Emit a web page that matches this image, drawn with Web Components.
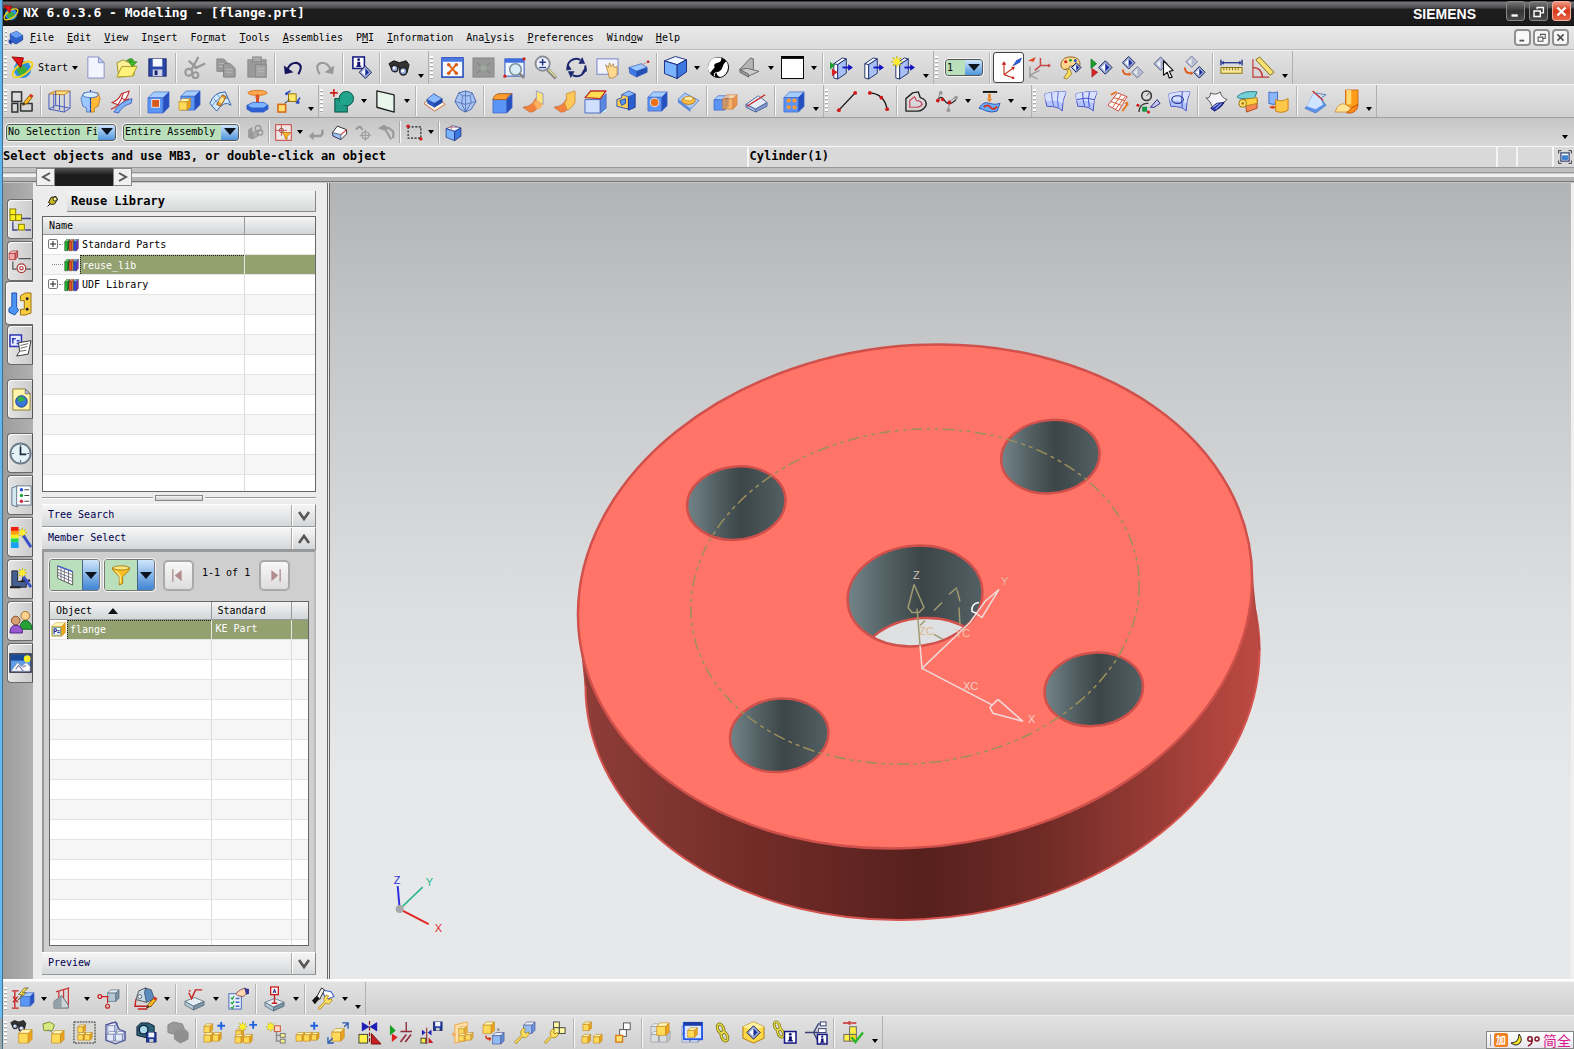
<!DOCTYPE html>
<html lang="en">
<head>
<meta charset="utf-8">
<title>NX 6.0.3.6 - Modeling - [flange.prt]</title>
<style>
html,body{margin:0;height:100%}
body{font:10px/14px "DejaVu Sans Mono","Noto Sans CJK SC",monospace;color:#000;background:#d4d4d4;overflow:hidden}
</style>
</head>
<body>
<nx-app>
  <nx-titlebar slot="top" caption="NX 6.0.3.6 - Modeling - [flange.prt]" brand="SIEMENS"></nx-titlebar>
  <nx-menubar slot="top" items="_File _Edit _View In_sert Fo_rmat _Tools _Assemblies P_MI _Information Ana_lysis _Preferences Wind_ow _Help"></nx-menubar>
  <nx-row slot="top">
    <nx-toolbar><nx-start>Start</nx-start><nx-tools icons="new open save | cut copy paste | undo redo | info | find ,"></nx-tools></nx-toolbar>
    <nx-toolbar><nx-tools icons="fit fitsel zoombox zoom rotate pan persp | shaded v section edgeview v bgwhite v | clip1 clip2 clip3 ,"></nx-tools></nx-toolbar>
    <nx-toolbar><nx-combo label="Work layer" value="1" class="layer"></nx-combo><nx-tools icons="| *wcs wcsorient palette showhide hide select invert | ruler angle ,"></nx-tools></nx-toolbar>
  </nx-row>
  <nx-row slot="top" class="second">
    <nx-toolbar><nx-tools icons="sketch | extrude revolve sweep | block pocket surface | pull assyconstr ,"></nx-tools></nx-toolbar>
    <nx-toolbar><nx-tools icons="unite v plane v | trimbody sphere | blend draft draft2 chamfer shell hole emboss | split divide | pattern ,"></nx-tools></nx-toolbar>
    <nx-toolbar><nx-tools icons="line arc | offset spline v project v ,"></nx-tools></nx-toolbar>
    <nx-toolbar><nx-tools icons="mesh1 mesh2 mesh3 studio mesh4 | sheet roll patch | draftan flow ,"></nx-tools></nx-toolbar>
  </nx-row>
  <nx-selectionbar slot="top"></nx-selectionbar>
  <nx-status slot="top"><span>Select objects and use MB3, or double-click an object</span><span slot="cue">Cylinder(1)</span></nx-status>
  <nx-strip slot="top"></nx-strip>
  <nx-resourcebar slot="side"></nx-resourcebar>
  <nx-panel slot="panel" caption="Reuse Library">
    <nx-tree></nx-tree>
    <nx-splitter></nx-splitter>
    <nx-section caption="Tree Search"></nx-section>
    <nx-section caption="Member Select" open><nx-members></nx-members></nx-section>
    <nx-section caption="Preview"></nx-section>
  </nx-panel>
  <nx-viewport slot="view"></nx-viewport>
  <nx-row slot="bottom" class="low">
    <nx-toolbar><nx-tools icons="autodim v vertdim v orddim | drawsketch v | finish v checklist | datum v | pmitools v ,"></nx-tools></nx-toolbar>
  </nx-row>
  <nx-row slot="bottom" class="low">
    <nx-toolbar><nx-tools icons="findcomp opencomp isolate ghost snapshot graycomp | addcomp newcomp newparent comparray movecomp mirror constrain remember moveto replace wrench wrench2 | explode sequence | wave1 wave2 link interpart linkinfo relinfo | checkassy ,"></nx-tools></nx-toolbar>
  </nx-row>
  <nx-ime slot="float"></nx-ime>
</nx-app>

<script>
const define = (name, css, html) => customElements.define(name, class extends HTMLElement {
  connectedCallback() {
    if (this.shadowRoot) return;
    const root = this.attachShadow({mode: 'open'});
    root.innerHTML = `<style>:host,*{box-sizing:border-box}button{font:inherit;color:inherit;margin:0;padding:0;border:0;background:none}${css}</style>` + (typeof html === 'function' ? html(this) : html);
  }
});

/* ---------- icon drawing helpers (24 x 24 grid) ---------- */
const P = (d, f = 'none', s = 'none', w = 1) => `<path d="${d}" fill="${f}" stroke="${s}" stroke-width="${w}" stroke-linejoin="round"/>`;
const L = (d, s = '#222', w = 1.5, dash = '') => `<path d="${d}" fill="none" stroke="${s}" stroke-width="${w}" stroke-dasharray="${dash}"/>`;
const R = (x, y, w, h, f = 'none', s = 'none', k = 1) => `<rect x="${x}" y="${y}" width="${w}" height="${h}" fill="${f}" stroke="${s}" stroke-width="${k}"/>`;
const C = (x, y, r, f = 'none', s = 'none', w = 1) => `<circle cx="${x}" cy="${y}" r="${r}" fill="${f}" stroke="${s}" stroke-width="${w}"/>`;
const E = (x, y, a, b, f, s = 'none', w = 1) => `<ellipse cx="${x}" cy="${y}" rx="${a}" ry="${b}" fill="${f}" stroke="${s}" stroke-width="${w}"/>`;
const BL = ['#a4ccff', '#5a94f4', '#2450c0', '#3c64c4'], YE = ['#fff8b8', '#ffda58', '#eca41c', '#c48c20'],
      WH = ['#fff', '#e6efff', '#b8c8e8', '#5565a8'], LB = ['#eef6ff', '#7ab4ff', '#3c78e0', '#1c2c80'], ST = ['#e4eef4', '#b4c8d4', '#7c94a4', '#566a7a'];
const cube = (x, y, s, c = YE) => { const d = s * .28, f = s - d;
  return P(`M${x} ${y + d}l${d} ${-d}h${f}l${-d} ${d}z`, c[0], c[3], .7) + P(`M${x} ${y + d}h${f}v${f}h${-f}z`, c[1], c[3], .7) + P(`M${x + f} ${y + d}l${d} ${-d}v${f}l${-d} ${d}z`, c[2], c[3], .7); };
const iso = (x, y, r, c) => P(`M${x - r} ${y - r * .6}L${x} ${y - r}L${x + r} ${y - r * .7}L${x + r * .15} ${y - r * .25}z`, c[0], c[3]) + P(`M${x - r} ${y - r * .6}L${x + r * .15} ${y - r * .25}V${y + r}L${x - r} ${y + r * .55}z`, c[1], c[3]) + P(`M${x + r * .15} ${y - r * .25}L${x + r} ${y - r * .7}V${y + r * .4}L${x + r * .15} ${y + r}z`, c[2], c[3]);
const slab = (y, c) => P(`M2 ${y + 4}L12 ${y}L22 ${y + 4}L11 ${y + 9}z`, c[0], c[3], .8) + P(`M2 ${y + 4}L11 ${y + 9}V${y + 13}L2 ${y + 8}z`, c[1], c[3], .8) + P(`M11 ${y + 9}L22 ${y + 4}V${y + 8}L11 ${y + 13}z`, c[2], c[3], .8);
const dia = (x, y, r, a = '#1c2f9c', o = 1) => `<g opacity="${o}">${P(`M${x - r} ${y}L${x} ${y - r}L${x + r} ${y}L${x} ${y + r}z`, '#9fb0dc', '#141c50')}${P(`M${x - r * .6} ${y}L${x} ${y - r * .6}V${y + r * .6}z`, '#fff')}${P(`M${x + r * .6} ${y}L${x} ${y - r * .6}V${y + r * .6}z`, a)}</g>`;
const plus = (x, y, r = 4, c = '#1e62e0', w = 2) => L(`M${x - r} ${y}H${x + r}M${x} ${y - r}V${y + r}`, c, w);
const star = (x, y, r = 5) => L(`M${x - r} ${y}H${x + r}M${x} ${y - r}V${y + r}M${x - r * .7} ${y - r * .7}l${r * 1.4} ${r * 1.4}M${x + r * .7} ${y - r * .7}l${-r * 1.4} ${r * 1.4}`, '#c8c000', 1.2) + C(x, y, r * .55, '#ffee30');
const ar = (x, y, dx, dy, c = '#1010c0') => { const px = -dy, py = dx; return P(`M${x + dx} ${y + dy}L${x + px * .7} ${y + py * .7}L${x - px * .7} ${y - py * .7}z`, c); };
const flop = (x, y, s) => R(x, y, s, s, '#203a9c', '#101c60', .8) + R(x + s * .2, y, s * .6, s * .5, '#f0f4ff') + R(x + s * .3, y + s * .68, s * .42, s * .32, '#ccc');
const arm = c => P('M4 20L12 12L11 8L14 4L17 5L15 8L17 10L20 8L21 11L17 15L13 14L6 22z', c || '#ffe060', '#a07808', .9);
const bino = (x, y, k = 1) => `<g transform="translate(${x} ${y}) scale(${k})">${P('M1 5L6 2L12 4L19 2L22 6L20 14L13 13L11 8L8 12L4 11z', '#333', '#111')}${C(7, 10, 3.4, '#8fa4d8', '#222', 1.4)}${C(16, 13, 3.8, '#8fa4d8', '#222', 1.4)}${C(6.5, 9.5, 1.4, '#fff')}${C(15.5, 12.5, 1.6, '#fff')}</g>`;
const bolt = (x, y) => P(`M${x + 6} ${y}L${x} ${y + 7}L${x + 4} ${y + 7}L${x - 1} ${y + 13}L${x + 8} ${y + 5}L${x + 4} ${y + 5}L${x + 10} ${y}z`, '#ffe838', '#333', .6);
const pencil = (x, y) => P(`M${x} ${y + 8}L${x + 2} ${y + 4}L${x + 7} ${y - 2}L${x + 10} ${y}L${x + 5} ${y + 6}z`, '#ffb820', '#6a3c00', .8) + P(`M${x + 7} ${y - 2}l3 2l1.5 -2l-3 -2z`, '#d83020') + P(`M${x} ${y + 8}l1.5 -3l1.5 1.5z`, '#222');
const clipbox = P('M4 8L8 8V24L4 23z', '#fff', '#20306c') + P('M4 8L13 2L17 3L8 9z', '#f4f8ff', '#20306c') + P('M8 9L17 3V18L8 24z', '#a8c0f4', '#20306c') + L('M13 12H20', '#1418c8', 2) + ar(19, 12, 5, 0);
const wrap = extra => P('M1 4Q12 1 23 2Q19 10 19 22Q16 17 3 17Q1 10 1 4', '#b4c4ff', '#4450c8') + P('M1 4Q12 1 23 2Q20 8 19 14Q12 9 2 12Q1 8 1 4', '#d8e2ff') + extra;
const chain = (x, y) => `<g fill="none" stroke="#777000" stroke-width="3.2"><ellipse cx="${x}" cy="${y}" rx="3" ry="5" transform="rotate(-25 ${x} ${y})"/><ellipse cx="${x + 4}" cy="${y + 8}" rx="3" ry="5" transform="rotate(-25 ${x + 4} ${y + 8})"/></g><g fill="none" stroke="#e8dc50" stroke-width="1.6"><ellipse cx="${x}" cy="${y}" rx="3" ry="5" transform="rotate(-25 ${x} ${y})"/><ellipse cx="${x + 4}" cy="${y + 8}" rx="3" ry="5" transform="rotate(-25 ${x + 4} ${y + 8})"/></g>`;
const ibox = (x, y, s) => R(x, y, s, s, '#fff', '#141880', 1.6) + R(x + s * .38, y + s * .42, s * .26, s * .42, '#101470') + R(x + s * .28, y + s * .76, s * .46, s * .1, '#101470') + C(x + s * .5, y + s * .24, s * .12, '#101470');
const book = (x, c) => P(`M${x} 8l3 -4h5l-3 4z`, c[0], '#222', .6) + P(`M${x} 8h5v14h-5z`, c[1], '#222', .6) + P(`M${x + 5} 8l3 -4v14l-3 4z`, c[2], '#222', .6);
const isomany = c => cube(2, 3, 10, c) + cube(2, 11, 11, c) + cube(11, 11, 11, c);

const ICONS = {
  nx: E(12, 14, 9, 9, '#2e8fe0') + P('M6 14Q10 8 16 12Q18 18 12 21Q7 20 6 14', '#3cae38') + `<ellipse cx="12" cy="14" rx="12" ry="5.500" fill="none" stroke="#f4d21c" stroke-width="2" transform="rotate(-35 12 14)"/>` + P('M1 1L13 2L10 12z', '#e01818', '#900'),
  app: P('M3 6L13 2L22 8L22 15L12 21L4 17z', '#2d62cc', '#142c80') + P('M3 6L13 2L22 8L12 12z', '#6aa0f4') + P('M1 14L6 17L5 22L1 19z', '#1a3fa0'),
  new: P('M4 1H15L21 7V23H4z', '#f2f4ff', '#8890c8') + P('M15 1V7H21z', '#c4ccf4', '#8890c8'),
  open: P('M2 7L9 4L12 6H20V20L4 22z', '#fff09a', '#9a9020') + P('M2 22L7 11H23L18 21z', '#fff27a', '#a89c20') + P('M12 5Q18 0 20 6L23 6L18 11L14 6L17 6Q15 4 12 5z', '#3cb828', '#207010', .6),
  save: R(3, 3, 18, 18, '#2b48a8', '#16246c') + R(7, 3, 10, 8, '#f4f8ff') + R(7, 14, 10, 7, '#ccd2e8') + R(9, 15, 3, 5, '#16246c'),
  cut: L('M9 14L16 1M12 13L23 8M15 13L6 5', '#999', 2.4) + C(6, 17, 3.6, 'none', '#999', 2.2) + C(13, 20, 3, 'none', '#999', 2.2),
  copy: P('M3 3H10L14 7V16H3z', '#999', '#888') + P('M10 8H17L22 13V22H10z', '#9d9d9d', '#808080') + L('M5 8H11M5 11H9M12 14H19M12 17H19', '#bbb', 1),
  paste: R(3, 4, 19, 18, '#999', '#888') + R(8, 1, 9, 5, '#aaa', '#888') + R(11, 9, 11, 13, '#a4a4a4', '#888') + L('M13 13H20M13 16H20', '#bbb', 1),
  undo: L('M6 13Q9 7 15 7Q23 9 17 19', '#14145c', 2.2) + P('M2 10L3 19L12 17z', '#14145c'),
  redo: L('M18 13Q15 7 9 7Q1 9 7 19', '#999', 2.2) + P('M22 10L21 19L12 17z', '#999'),
  info: ibox(3, 1, 12) + dia(16, 17, 6.5),
  find: bino(1, 3, 1),
  fit: R(1, 2, 22, 20, '#f4f8ff', '#2048b8', 1.6) + R(1, 2, 22, 4, '#4a78e0') + L('M8 9L16 18M16 9L8 18', '#e06818', 2) + C(8, 9, 1.8, '#d85810') + C(16, 9, 1.8, '#d85810') + C(8, 18, 1.8, '#d85810') + C(16, 18, 1.8, '#d85810'),
  fitsel: R(1, 2, 22, 20, '#989898', '#8a8a8a') + L('M5 7L19 18M19 7L5 18', '#808c80', 1.5) + R(9, 10, 6, 5, '#9fa89f'),
  zoombox: R(2, 3, 20, 18, '#f0f6ff', '#2850c0') + R(2, 3, 20, 4, '#3f70e0') + C(13, 14, 6, '#d8ecf4', '#7a8e9c', 1.6) + L('M17 18L22 23', '#888', 3) + C(22, 3, 1.7, '#d02020') + C(2, 21, 1.7, '#d02020'),
  zoom: C(9, 8, 7.4, '#eef2fc', '#8a8e98', 2) + plus(9, 6.5, 3.4, '#283888', 1.6) + L('M5.500 12H12.500', '#283888', 1.4) + L('M14 14L23 23', '#888', 4) + L('M15 14L23 22', '#e8e088', 1.4),
  rotate: L('M3 14A9 9 0 0 1 16 4M21 10A9 9 0 0 1 8 20', '#1c2870', 2) + P('M14 8L21 8L18 1z', '#1c2870') + P('M10 16L3 16L6 23z', '#1c2870') + P('M17 18L22 10L23 16z', '#1c2870') + P('M1 15L7 14L3 8z', '#1c2870'),
  pan: R(1, 3, 22, 16, '#f4f4ff', '#7080c8') + P('M12 15L10 9L13 12L14 7L16 11L18 8L19 12L22 11L22 20L18 23H14z', '#ffd890', '#a07030', .7),
  persp: P('M2 12L15 8L21 12L10 16z', '#9cc8ff', '#2a58b8', .7) + P('M2 12L10 16V22L3 18z', '#3c7be4', '#2a58b8', .7) + P('M10 16L21 12V17L10 22z', '#2450b4', '#2a58b8', .7) + C(22, 6, 1.4, '#c02020') + L('M15 9L21 7', '#c88', .8),
  shaded: iso(12, 12, 11.5, LB),
  section: C(12, 12, 10.5, '#000', '#000') + P('M12 1.500A10.500 10.500 0 0 0 3 18Q6 14 8 12Q6 8 11 7Q15 7 15 1.900z', '#fff') + P('M20 5.500Q22 8 22 12Q21 20 14 22Q10 21 10 17Q15 16 16 12Q17 8 20 5.500', '#fff') + L('M8 21Q6 18 10 17', '#fff', 1),
  edgeview: P('M2 14L13 2L16 3V14L8 18z', '#b4b4b4', '#666') + P('M2 14L10 13L22 16L11 21z', '#ccc', '#666') + P('M2 14L11 19V22L2 17z', '#999', '#666'),
  bgwhite: R(0.5, 0.5, 23, 23, '#fff', '#000') + R(0, 0, 24, 3, '#000'),
  clip1: clipbox + P('M0 6L5 10L0 14z', '#18a028') + P('M2 13L8 17L2 21z', '#d82020'),
  clip2: clipbox, clip3: clipbox + star(5, 6, 6),
  wcs: L('M6 20V7M6 20L17 12M6 20L17 24', '#c83828', 1.4) + ar(6, 8, 0, -4, '#c02020') + ar(16, 12.500, 3, -2, '#c02020') + ar(16, 23.500, 3, 1, '#c02020') + P('M17 9L21 3L27 0L25 5L18 9z', '#2a60d8', '#1a2c90', .6),
  wcsorient: L('M13 10V2M13 10H23M13 10L7 15', '#c84848', 1.6) + L('M2 23V11M2 20L12 15M2 20L10 24', '#9a9a9a', 1.4) + P('M0 5L8 1L6 6z', '#e04820') + ar(21, 10, 3, 0, '#c84848'),
  palette: P('M2 8Q4 0 14 1Q22 2 22 9Q20 14 15 12L14 10Q10 10 10 14L5 14Q1 12 2 8', '#ffd890', '#906020') + C(7, 6, 1.6, '#d02020') + C(12, 4.500, 1.5, '#18a028') + C(17, 5, 1.5, '#2050d8') + dia(18, 12, 5) + P('M5 23L9 17L8 13L12 15L13 19L8 24z', '#ffe060', '#907010', .8),
  showhide: P('M1 3L7 8L1 13z', '#18a028', '#0c6018', .6) + P('M2 13L8 17L2 22z', '#e02020', '#801010', .6) + dia(16, 12, 7),
  hide: dia(8, 7, 6.5) + dia(17, 17, 6, '#8c98c8', .5) + L('M2 14Q2 20 8 19', '#e05818', 2) + ar(8, 19, 3, 0, '#e05818'),
  select: dia(9, 8, 7, '#8c98c8', .65) + P('M12 5V20L16 17L18 23L21 22L18 16L22 15z', '#fff', '#111', 1.2),
  invert: dia(9, 6, 6, '#8c98c8', .5) + dia(17, 17, 6) + L('M2 12Q2 18 8 18', '#e05818', 2) + ar(8, 18, 3, 0, '#e05818'),
  ruler: R(1, 12, 22, 6, '#f8e898', '#8a7410') + L('M4 12V15M7 12V15M10 12V15M13 12V15M16 12V15M19 12V15', '#665500', .8) + L('M3 7H21', '#28388c', 1.4) + ar(4, 7, -3, 0, '#28388c') + ar(20, 7, 3, 0, '#28388c') + L('M1 4V10M23 4V10', '#28388c'),
  angle: L('M2 3V22H19', '#c03838', 1.2) + L('M2 12Q11 12 12 22', '#c03838') + P('M5 4L9 1L24 17L20 20z', '#f8e070', '#7c6a10'),
  sketch: R(1, 2, 10, 10, 'none', '#333', 1.6) + R(1, 14, 6, 9, 'none', '#333', 1.6) + P('M10 14H22V22H10z', 'none', '#333', 1.6) + pencil(12, 8),
  extrude: P('M1 4L8 1H23L17 5z', '#ffdf80', '#c08020') + L('M1 4V20L17 23V5M8 1V16L23 19V1M1 20L8 16M17 23L23 19M6 4V20M12 5V21', '#4458b8', 1),
  revolve: P('M12 3H20L22 9L20 17L16 19V23H12z', '#ffb838', '#b87410', .8) + P('M12 3H5L2 9L4 17L8 19V23H12z', '#9cc8ff', '#3c68c0', .8) + L('M12 0V24', '#1c3ca8', 1.2, '3 1') + E(12, 5, 8, 3, '#d8ecff', '#4a74c8'),
  sweep: P('M2 13Q8 12 12 4L20 1Q18 10 10 16z', '#fff', '#c03030', 1.2) + P('M4 23Q10 12 23 9L22 14Q13 16 9 24z', '#7cb0f8', '#2c50b8', .8) + L('M1 20Q10 18 14 3M12 8Q16 12 20 9', '#c03030', 1.2),
  block: cube(1, 2, 22, BL) + R(5, 10, 8, 8, '#d85818', '#fff', .8), pocket: cube(3, 1, 20, BL) + cube(1, 9, 12, YE),
  surface: P('M1 14Q5 2 17 2L23 16Q16 10 8 22z', '#d0e8ff', '#2c60a8') + L('M3 17Q9 6 20 9M9 5L15 13M5 9L12 17', '#5080c0', .8) + P('M8 15L14 5L18 7L12 17z', '#e89830', '#804808', .8) + P('M10 12L13 7L16 9L13 14z', '#ffe890'),
  pull: E(12, 3, 10, 2.6, '#ffa850', '#d87820') + L('M12 14V8', '#e04818', 3) + ar(12, 8, 0, -4, '#e04818') + P('M1 16L7 13H19L23 16L18 19H6z', '#7cb4ff', '#2858c0', .8) + P('M1 16L6 19H18L23 16V20L18 23H6L1 20z', '#2c60d4', '#2858c0', .8),
  assyconstr: R(12, 4, 8, 8, '#ffe868', '#907000') + R(1, 15, 8, 8, '#ffe070', '#d86818', 1.6) + L('M8 14L13 10', '#555', 1.2) + L('M9 4L14 1M20 14L24 8', '#2848c0', 1.6) + C(10, 4, 1.5, '#2848c0') + C(22, 13, 1.5, '#2848c0'),
  unite: R(4, 9, 13, 14, '#1f9a84', '#064c40') + C(16, 9, 7.500, '#20a48c', '#064c40') + P('M9 9H17V16H9z', '#20a48c') + plus(3, 3, 4, '#d01818', 1.6),
  plane: P('M3 1L21 5V23L3 18z', '#e8f6ec', '#222', 1.4),
  trimbody: P('M1 14L12 4L23 15L12 22z', '#fff4e8', '#c86838') + P('M4 10L11 4L20 9L12 14z', '#8cbcff', '#2448a8', .7) + P('M4 10L12 14V18L5 14z', '#2c5cc8', '#2448a8', .7) + P('M12 14L20 9V13L12 18z', '#1c48a8', '#2448a8', .7),
  sphere: P('M5 3L12 1L19 3L23 12L18 20L12 23L6 20L1 12z', '#a8c4f4', '#4a68b0') + L('M1 12L12 15L23 12M12 1V23M5 3L9 6L17 6L19 3M9 6L8 14L12 23M17 6L18 13L12 23', '#4a68b0', .8),
  blend: cube(2, 4, 20, BL) + P('M2 10Q3 4 9 4H22Q17 5 16 10z', '#ff9c30', '#a85808', .8),
  draft: P('M1 18Q11 17 14 9L20 12Q15 24 8 23z', '#f4813c', '#c06028', .7) + P('M15 1L22 4V15Q17 13 15 10z', '#ffe478', '#8890c0', .8) + P('M15 10Q17 13 22 15Q19 20 16 20L12 14z', '#ffb060'),
  draft2: P('M1 18Q11 17 14 9L20 12Q15 24 8 23z', '#f4813c', '#c06028', .7) + P('M14 4L23 1V13Q19 20 15 21L12 14Q15 10 14 4z', '#ffc858', '#c88830', .8),
  chamfer: R(1, 3, 22, 20, '#c8ecff') + P('M1 10H17V24H1z', '#cfe0ff', '#4a68c0') + P('M17 10L23 4V19L17 24z', '#5a88e0', '#4a68c0') + P('M1 8L7 1H23L17 9z', '#ffdf50', '#c03028', 1.4),
  shell: P('M2 10L7 8V5L14 2V20L2 17z', '#ffd050', '#2c50b0') + P('M14 2L21 4V18L14 21z', '#2c60d0', '#1c3c98') + P('M5 11L11 9V14L7 16z', '#5a94f0', '#2c50b0') + P('M7 5L14 1L21 4L14 7z', '#8cbcff', '#2c50b0', .7),
  hole: cube(2, 2, 20, BL) + C(9, 13, 4.500, '#e87018', '#fff', .8),
  emboss: P('M1 10L8 3L23 11L14 20z', '#a8ccff', '#4870c0', .8) + P('M1 10L14 20V23L1 13z', '#5a88dc') + E(12, 11, 7, 4, '#ffc048', '#b87818') + E(12, 9, 4.500, 2.400, '#ffe8a0', '#b87818', .7),
  split: cube(0, 6, 15, BL) + `<g opacity=".75">${cube(9, 5, 15, ['#ffd8a0', '#ffa848', '#f08020', '#d06010'])}</g>`,
  divide: P('M1 15L14 6L23 13L11 20z', '#e4ecf8', '#5068a0') + P('M1 15L11 20V23L1 18z', '#a8bce0', '#5068a0') + P('M11 20L23 13V17L11 23z', '#8098d0', '#5068a0') + L('M2 17L21 5', '#c82020', 1.3),
  pattern: cube(2, 2, 21, BL) + C(7, 11, 2.2, '#ff9830') + C(13, 11, 2.2, '#ff9830') + C(7, 18, 2.2, '#ff9830') + C(13, 18, 2.2, '#ff9830'),
  line: L('M3 21L20 3', '#111', 1.4) + C(3, 21, 2, '#d01818') + C(20, 3, 2, '#d01818'),
  arc: L('M3 3Q18 4 21 20', '#111', 1.4) + C(3, 3, 2, '#d01818') + C(15, 8, 2, '#d01818') + C(21, 20, 2, '#d01818'),
  offset: P('M2 22V9L9 3L15 2L17 8Q24 10 23 16Q20 22 14 22z', 'none', '#222', 1.4) + P('M6 18V11L11 7L13 11Q18 11 19 15Q17 18 13 18z', 'none', '#c84860', 1.3),
  spline: L('M2 12Q6 4 10 11T22 10', '#222', 1.3) + L('M2 12L6 2M14 22L15 12L22 7', '#888', 1) + C(3, 11, 2, '#d01818') + C(8, 10, 1.8, '#d01818') + C(15, 13, 2, '#d01818') + C(6, 3, 2, '#999') + C(14, 21, 2, '#999') + C(22, 8, 2, '#999'),
  project: L('M5 2H20', '#111', 2) + L('M12 4V9', '#e88830', 3) + ar(12, 9, 0, 4, '#e88830') + P('M1 19Q6 11 12 14Q18 16 23 14L20 22Q14 24 9 22Q5 20 1 19', '#68aef8', '#2858b8') + L('M6 18Q10 14 13 18T20 17', '#d83028', 2),
  mesh1: wrap(L('M8 3Q8 10 10 17M15 2Q13 10 15 18', '#5a68d0', 1)), mesh2: wrap(L('M8 3Q8 10 10 17M15 2Q13 10 15 18M2 10Q12 7 20 10', '#3848c8', 1)),
  mesh3: P('M2 16L12 3L22 7L13 22z', '#fff', '#c84838', 1) + L('M5 12L16 16M8 8L19 11M7 18L16 5M10 20L20 7', '#d85030', 1) + L('M5 5L11 2M17 22L23 14', '#e87828', 2) + ar(21, 15, 2, -3, '#e87828'),
  studio: C(10, 6, 5, 'none', '#333', 1.6) + L('M10 6L13 3', '#333', 1) + L('M2 23Q3 13 12 14', '#333', 1.3) + R(6, 18, 4, 4, '#18a038', '#084') + C(12, 23, 1.6, '#d01818') + C(1, 16, 1.6, '#d01818') + P('M14 18L21 10L24 14L18 18z', '#c0c8f0', '#28287c'),
  mesh4: wrap(E(10, 10, 6, 4, 'none', '#28388c', 1.3) + L('M15 2Q13 10 15 18', '#3848c8', 1)),
  sheet: P('M1 8Q5 10 6 3Q11 6 16 2Q17 8 23 10Q18 13 18 16Q12 12 8 18Q6 12 1 8', '#f4f4f8', '#555') + P('M6 19L12 14L20 13L16 18L10 22z', '#2838b8', '#101860') + L('M8 18L14 14M11 20L17 14', '#fff', .8),
  roll: P('M1 7Q8 0 22 2L19 9H4z', '#74d0d8', '#2a7c88') + P('M10 14L22 9V19L11 23z', '#f48850', '#b04820') + P('M6 10L22 8V14L8 17z', '#ffd040', '#a87810', .8) + C(7, 14, 4, '#ffe070', '#907008') + C(7, 14, 1.5, '#b07810'),
  patch: P('M2 2Q6 4 11 2V14Q6 16 2 14z', '#8cb8ff', '#4068c0') + P('M9 10Q15 13 22 9V21Q15 25 9 22z', '#ffc848', '#c88010') + L('M3 18H7', '#e04010', 2) + ar(6, 18, 3, 0, '#e04010'),
  draftan: P('M4 16L9 5Q13 2 17 8L23 16L12 24L1 19z', '#5c94ec', '#4878c8', .8) + P('M3 17L9 5Q13 2 17 8L20 15L12 20z', '#cfe4ff') + L('M9 1L20 11', '#c82828', 1.4) + L('M12 3L23 5L17 9', '#5880c8', 1),
  flow: P('M11 0H24V15L17 19L11 15z', '#ff9c18', '#c85808', .8) + P('M12 0h5v15h-5z', '#ffd870') + P('M0 23Q4 12 11 15L17 19Q15 24 11 23z', '#ffe498', '#c88830', .8) + P('M17 19L24 15Q24 22 17 24H12z', '#ff8c18', '#b84808', .8),
  autodim: cube(10, 6, 14, BL) + L('M1 4H8M1 22H8M4 5V21', '#c82020', 1.4) + L('M2 10L7 16M7 10L2 16', '#c82020', 1.4) + bolt(8, 1),
  vertdim: L('M5 15V4M10 12V3M15 20V1M2 5L16 1', '#c83838', 1.3) + P('M0 15L8 9L15 19V22H0z', '#ccd4d8', '#667') + P('M0 15L8 9V22H0z', '#94a0a8'),
  orddim: cube(11, 3, 12, ST) + L('M5 10H12M11 11V17', '#c82020', 1.2) + C(3, 10, 2, 'none', '#c82020', 1.3) + C(11, 20, 2, 'none', '#c82020', 1.3),
  drawsketch: P('M5 4L12 1L19 8L13 16L2 13z', '#c8dce8', '#333', .8) + P('M12 1L18 3L21 12L13 16L11 6z', '#5c8cc0', '#345', .8) + C(6, 10, 2, '#fff', '#556') + L('M2 13L1 20H18M4 23H14', '#c82020', 1.5) + pencil(13, 14),
  finish: slab(11, ST) + L('M6 6L9 12L13 3H20', '#c82020', 1.5) + C(7, 4, 1, '#c22'),
  checklist: R(3, 7, 13, 16, '#e8f0ff', '#4868b8') + L('M5 11l1.500 1.500l2 -3M5 16l1.500 1.500l2 -3M5 21l1.500 1.500l2 -3', '#18a028', 1.2) + L('M10 12H14M10 16H14M10 20H14', '#4868b8') + P('M10 7L15 3L20 1L23 5L18 10L12 9z', '#ffd8b0', '#855') + P('M19 1L24 2V7L21 8z', '#383898'),
  datum: slab(12, ST) + R(8, 0, 8, 8, '#fff', '#c82020', 1.4) + L('M12 8V17M9 17H15', '#c82020', 1.4) + L('M10.500 6.500L12 2L13.500 6.500M11 5H13', '#28287c', 1),
  pmitools: P('M10 3L20 5L23 10L15 13z', '#fff', '#4868c8', 1.2) + P('M5 10L10 1L13 3L8 13z', '#f0f0f0', '#222') + P('M0 14L5 9L8 12L3 18z', '#111') + `<g transform="translate(3 5) scale(.85)">${arm()}</g>`,
  findcomp: bino(-1, -2, .75) + cube(8, 9, 14), opencomp: P('M1 3L8 1L13 4L11 10H2z', '#d8e880', '#789028') + P('M6 9L11 12', 'none', '#888') + cube(10, 10, 13),
  isolate: `<rect x="1" y="1" width="22" height="22" fill="#d8d8d4" stroke="#222" stroke-dasharray="2 1"/>` + cube(5, 4, 8) + cube(5, 12, 8) + cube(12, 12, 8),
  ghost: `<g opacity=".8">${cube(4, 2, 10, WH)}${cube(3, 11, 10, WH)}${cube(12, 11, 10, WH)}</g>` + L('M2 4L12 1L16 9L22 11V20L12 24L2 20z', '#404890', 1.2),
  snapshot: P('M2 6L6 2H14L20 5V14L14 18L2 15z', '#2c6078', '#123') + C(9, 9, 4.500, '#a8d8e8', '#123', 1.4) + flop(12, 12, 10),
  graycomp: P('M2 4L8 1L17 3L19 8L23 12V19L15 23L9 19L9 14L2 12z', '#999', '#8a8a8a') + P('M9 11L16 8L23 12V19L15 22L9 18z', '#8f8f8f'),
  addcomp: cube(1, 3, 9) + cube(1, 12, 10) + cube(10, 12, 9) + plus(19, 5), newcomp: cube(2, 8, 8) + cube(1, 14, 9) + cube(10, 14, 9) + star(9, 6, 5) + plus(20, 4),
  newparent: star(6, 6, 5) + R(10, 5, 6, 6, '#ffd8c8', '#c85838') + L('M12 11V21H16M12 15H16', '#888') + R(16, 13, 5, 4, '#f8f088', '#777') + R(16, 19, 5, 4, '#f8f088', '#777'),
  comparray: cube(0, 12, 9) + cube(8, 12, 9) + cube(16, 12, 8) + plus(19, 5),
  movecomp: cube(5, 8, 13) + L('M18 6L22 2M16 2H22V8M1 17V23H7M2 22L6 18', '#2858b0', 1.4),
  mirror: P('M4 1L12 6L4 11z', '#2020b8') + P('M20 1L12 6L20 11z', '#2020b8') + L('M12 0V24', '#801010', 1.2, '4 2') + R(1, 14, 9, 9, '#fff048', '#443') + P('M14 13L24 24H14z', '#c82020', '#711'),
  constrain: P('M1 4L7 10L1 15z', '#18a028') + P('M3 13L9 17L3 22z', '#e02020') + L('M18 1V11M12 11H24', '#902838', 1.4) + L('M12 22L18 14M17 22L23 14', '#902838', 1.6),
  remember: P('M2 9L6 12L2 15z', '#2020b8') + P('M12 9L8 12L12 15z', '#2020b8') + R(1, 18, 5, 5, '#fff048', '#443') + P('M9 17L14 23H9z', '#c82020') + L('M7 7V24', '#811', 1) + flop(14, 1, 9),
  moveto: P('M4 4L17 1V20L4 23z', '#ffe0a8', '#f0a848') + `<g opacity=".85">${cube(8, 6, 8)}${cube(8, 13, 8)}${cube(15, 12, 8)}</g>` + C(3, 14, 2, '#f4b068'),
  replace: cube(1, 1, 12) + `<g opacity=".75">${cube(11, 12, 12, LB)}</g>` + L('M4 15Q4 20 9 18', '#d83018', 1.6) + ar(7, 19, 3, -1, '#d83018') + C(17, 9, 1.5, '#999'),
  wrench: `<g opacity=".7">${cube(11, 1, 12, LB)}</g><g transform="translate(-2 4) scale(.9)">${arm()}</g>`,
  wrench2: R(10, 1, 6, 6, '#fff8a0', '#444') + R(10, 7, 6, 6, '#fff8a0', '#444') + R(16, 7, 6, 6, '#fff8a0', '#444') + `<g transform="translate(-3 5) scale(.85)">${arm()}</g>`,
  explode: cube(2, 1, 9) + cube(1, 14, 9) + cube(13, 14, 9), sequence: R(12, 2, 7, 7, '#fff', '#555') + R(8, 9, 7, 7, '#fff', '#555') + R(4, 15, 7, 7, '#ffe070', '#d87818', 1.4),
  wave1: `<g opacity=".8">${isomany(['#f4f4f4', '#d8e0e0', '#b8c4c4', '#889'])}</g>` + cube(8, 2, 13), wave2: `<g opacity=".7">${isomany(WH)}</g>` + R(4, 2, 19, 17, '#dce8ff', '#2858e8', 2) + R(4, 1, 19, 4, '#1c3ca8') + cube(8, 7, 10),
  link: chain(10, 8), interpart: P('M12 1L23 6V18L12 23L1 18V6z', '#ffd848', '#b07c08') + P('M12 1L23 6L12 10L1 6z', '#fff0a0') + dia(12, 12, 7),
  linkinfo: `<g transform="translate(-2 -1) scale(.9)">${chain(7, 7)}</g>` + ibox(12, 11, 12),
  relinfo: L('M1 12H10L15 3H18M10 12H16M10 12L14 20', '#384078', 1.4) + R(17, 1, 6, 4, '#fff', '#384078') + R(15, 8, 8, 4, '#fff', '#384078') + ibox(14, 14, 10),
  checkassy: R(9, 6, 7, 8, '#fff048', '#666') + R(3, 14, 6, 7, '#fff048', '#666') + R(9, 14, 7, 7, '#f4d820', '#666') + L('M11 17L15 22L23 12', '#28b828', 2.4) + L('M2 2H8M11 2H16', '#d05858', 2) + C(9, 2, 2, '#c84848'),
  /* selection bar */
  sb1: P('M3 8L9 4V22L3 19z', '#999') + P('M9 12L17 9V17L9 21z', '#a8a8a8', '#888') + C(17, 6, 4, 'none', '#999', 2) + C(20, 12, 3.500, 'none', '#999', 2),
  sb2: R(1, 1, 22, 22, '#f0e8e8', '#c84040', 1.4) + plus(9, 9, 8, '#c84040', 1.2) + C(9, 9, 3, 'none', '#843', 1.2) + P('M10 12L22 12L17 18V22L14 20V17z', '#ffb820', '#b06008'),
  sb3: L('M7 17H17Q22 15 20 8', '#999', 3.4) + P('M1 17L8 11V23z', '#999'), sb4: P('M2 12L9 3L22 8L22 14L14 22L3 17z', '#fff', '#333', 1.4) + P('M2 12L14 15L14 22L3 17z', '#9cc4f0', '#335') + L('M14 15L22 8', '#c33'),
  sb5: L('M3 8Q8 0 12 8', '#999', 3) + C(16, 16, 5, 'none', '#999', 1.6) + plus(16, 16, 8, '#999', 1.4), sb6: P('M1 6L10 1L18 6L10 9z', '#999') + L('M12 8L20 22M16 5L23 11V20', '#999', 3),
  sb7: L('M3 4H21V20H3z', '#222', 1.6, '3 2') + C(3, 3, 2.4, '#d01818') + C(21, 21, 2.4, '#d01818'), sb8: iso(12, 13, 10.500, LB) + L('M4 5H18M9 1V10', '#c87878', 1),
  full: L('M1 6V1H6M18 1H23V6M23 18V23H18M6 23H1V18', '#333', 1.6) + R(5, 5, 14, 14, '#fff', '#28386c', 2) + R(7, 9, 10, 8, '#3c80d0'),
  /* resource bar */
  r1: R(1, 1, 6, 6, '#f8f020', '#887800') + R(1, 7, 6, 6, '#f8f020', '#887800') + R(7, 7, 6, 6, '#f8f020', '#887800') + L('M13 11H23M4 14V23H9M17 23H23', '#448', 1.4) + R(10, 17, 6, 6, '#f8f020', '#887800'),
  r2: cube(0, 1, 9, ['#ffd8d8', '#f0a8a8', '#d07070', '#a02020']) + L('M10 9H23M4 12V20H8M18 20H23', '#555', 1.3) + C(13, 19, 4.500, '#fff', '#a83838', 1.3) + C(13, 19, 1.8, 'none', '#a83838', 1.2),
  r3: P('M4 1H9V16L11 19L7 24L1 21V17L4 15z', '#4c94f4', '#1c50b0') + P('M13 4L18 1H24V22L18 24H13V18H17V9H13z', '#f8cc40', '#987008') + C(20, 7, 1.5, '#222') + C(20, 18, 1.5, '#222'),
  r4: R(1, 1, 12, 12, '#e8ecff', '#2c38b8', 1.6) + L('M3 5H7M4 5V10M8 7H11M8 10H11', '#2c38b8') + P('M10 9L23 7L20 21L8 23L11 18z', '#fff', '#333') + L('M12 12L20 10M12 15L19 13M11 18L18 17', '#555', .9),
  r5: P('M4 1H17L22 6V23H4z', '#fff4a8', '#8c7c30') + P('M17 1V6H22z', '#b8b8ec', '#777') + C(13, 14, 6, '#3878d8', '#1c3c90') + P('M9 10Q14 7 17 12Q14 15 10 14z', '#30b040'),
  r6: C(12, 12, 10.500, '#e4f2f8', '#6c7c88', 2) + L('M12 5V13H18', '#18283c', 1.8) + L('M12 3V5M12 19V21M3 12H5M19 12H21', '#456', 1.2),
  r7: P('M3 4L9 2V24L3 22z', '#d4e8f4', '#678') + R(8, 2, 15, 20, '#fff', '#678') + C(13, 6, 1.8, '#2848d0') + C(13, 12, 1.8, '#20a838') + C(13, 18, 1.8, '#d02840') + L('M16 6H21M16 12H21M16 18H21', '#444', 1.2),
  r8: R(2, 1, 8, 5, '#f02010') + R(2, 5, 8, 5, '#ff9c10') + R(2, 9, 8, 4, '#f8f020') + R(2, 13, 8, 4, '#20d858') + R(2, 17, 8, 6, '#18a0f4') + star(14, 7, 5) + L('M15 10L23 22', '#3850c8', 3),
  r9: P('M3 3H9V14H14V10L18 12V20H3z', '#456090', '#223') + L('M1 20H12M12 14L22 13', '#222', 2) + star(14, 5, 5) + L('M15 9L23 20', '#3850c8', 3),
  r10: C(17, 6, 4.500, '#ffd090', '#a07020') + P('M11 20Q12 11 17 11T24 18V20z', '#28a038', '#0c6018') + C(7, 11, 4.500, '#d8a070', '#804820') + P('M1 24Q1 16 7 16T14 22V24z', '#9858d0', '#502088'),
  r11: R(1, 2, 22, 19, '#5c9ce8', '#223', 1.4) + R(2, 3, 20, 6, '#184898') + P('M2 20L9 11L13 15L18 11L22 15V20z', '#fff', '#889', .7) + L('M7 18L10 14L15 20M14 16L18 14', '#7a7ab0', 1.2) + C(19, 7, 3.500, '#f8f020'),
  pin: P('M3 15L8 5L18 3L21 9L15 18L9 19z', '#c8b820', '#111', 1.8) + L('M7 17L1 23', '#111', 2) + C(16, 8, 4, '#fff8a0', '#111', 1.6),
  books: book(1, ['#60e860', '#20b830', '#108018']) + book(8, ['#ff7050', '#f05028', '#f8b028']) + book(15, ['#60a0ff', '#2848e0', '#8030c8']),
  part: cube(1, 1, 22, YE) + R(3, 9, 12, 12, '#fff', '#28a') + L('M5 19V11H8.500V15H5M10 14H14M10 17H14', '#141880', 1.6),
  grid: P('M2 1L20 8V24L2 16z', '#fff', '#444') + L('M2 5L20 12M2 9L20 16M2 12L20 20M6 3V18M10 4V20M15 6V22', '#556', .9) + L('M2 1L20 8', '#4060d0', 1.6),
  funnel: P('M2 3H22V6L14 14V22L10 24V14L2 6z', '#f8c020', '#a07008') + E(12, 3.500, 10, 2.500, '#ffe880', '#a07008') + P('M6 7L11 13V22', 'none', '#fff0a0', 1.4),
  prev: L('M3 2V22', '#a88888', 2) + P('M17 3V21L6 12z', '#b08c8c'), next: L('M21 2V22', '#a88888', 2) + P('M7 3V21L18 12z', '#b08c8c')
};
define('nx-icon', ':host{display:inline-flex;flex:none}svg{display:block;overflow:visible;width:var(--icon,23px);height:var(--icon,23px)}',
  el => `<svg viewBox="0 0 24 24" aria-hidden="true">${ICONS[el.getAttribute('name')] || ''}</svg>`);

/* ---------- page frame ---------- */
define('nx-app', `
  :host{display:flex;height:100vh;background:#d4d4d4;position:relative}
  .edge{flex:none;width:3px;background:linear-gradient(#5cb4f0,#66bdf5 97%,#9aa 97%);border-right:1px solid #4a6c88}
  .col{flex:1;min-width:0;display:flex;flex-direction:column}
  .work{flex:1;min-height:0;display:flex}
  .bottom{border-top:2px solid #fff;flex:none}
  .float{position:absolute;right:0;bottom:0}
`, `<div class="edge"></div><div class="col"><slot name="top"></slot>
  <div class="work"><slot name="side"></slot><slot name="panel"></slot><slot name="view"></slot></div>
  <div class="bottom"><slot name="bottom"></slot></div></div><div class="float"><slot name="float"></slot></div>`);

const winGlyph = {
  min: 'M5 14H12', restore: 'M8 7V5H15V11H12M4.500 9H11.500V15H4.500z', close: 'M5 5L14 14M14 5L5 14' };
const winBtn = (k, label, cls = '') => `<button class="${cls} ${k}" aria-label="${label}"><svg viewBox="0 0 19 19"><path d="${winGlyph[k]}" fill="none" stroke="currentColor" stroke-width="${k === 'restore' ? 1.6 : 2.6}"/></svg></button>`;

define('nx-titlebar', `
  :host{display:flex;flex:none;align-items:center;height:26px;gap:4px;padding:0 3px 0 0;color:#fff;
    background:linear-gradient(#000 0 1px,#77777b 2px,#4a4a4c 8px,#1e1e1f 9px,#1a1a1a 25px,#000);--icon:16px}
  h1{margin:0;font-size:13px;font-weight:bold;line-height:20px;flex:1;white-space:nowrap}
  b{font:bold 14px/20px "Liberation Sans",sans-serif;padding:2px 26px 0 0}
  button{width:19px;height:20px;border-radius:3px;border:1px solid #888;background:linear-gradient(#777,#333 50%,#4a4a4a);color:#fff;align-self:flex-start;margin-top:1px}
  .close{background:linear-gradient(#f09880,#d83818 50%,#e86848);border-color:#f0b0a0}
  svg{display:block}
`, el => `<nx-icon name="nx"></nx-icon><h1>${el.getAttribute('caption')}</h1><b>${el.getAttribute('brand')}</b>${winBtn('min', 'Minimize')}${winBtn('restore', 'Restore')}${winBtn('close', 'Close')}`);

define('nx-menubar', `
  :host{display:flex;flex:none;align-items:center;height:24px;padding:0 5px 0 2px;background:linear-gradient(#e9e9e9,#dcdcdc);border-bottom:1px solid #bbb;--icon:16px}
  nav{display:flex;flex:1;gap:1px} nav button{padding:0 6px}
  nx-icon{margin-left:1px}
  .grip{width:2px;height:16px;background:repeating-linear-gradient(#fff 0 2px,#999 2px 3px,#ddd 3px 4px)}
  .win{width:17px;height:17px;margin-left:2px;border:2px solid #909090;border-radius:4px;background:#f8f8f8;color:#555}
  svg{display:block}
`, el => `<span class="grip"></span><nx-icon name="app"></nx-icon><nav>${el.getAttribute('items').split(' ').map(t => `<button>${t.replace(/_(.)/, '<u>$1</u>')}</button>`).join('')}</nav>${winBtn('min', 'Minimize part', 'win')}${winBtn('restore', 'Restore part', 'win')}${winBtn('close', 'Close part', 'win')}`);

define('nx-row', `:host{display:flex;flex:none;height:34px;background:linear-gradient(#e2e2e2,#d0d0d0);border-top:1px solid #f0f0f0}
  :host(.second){border-bottom:1px solid #a0a0a0}`, '<slot></slot>');
define('nx-toolbar', `:host{display:flex;align-items:center;border-right:1px solid #b0b0b0}
  .grip{flex:none;width:3px;height:24px;margin:0 4px 0 1px;background:repeating-linear-gradient(#fff 0 2px,#aaa 2px 3px,#ddd 3px 4px)}
  :host(:first-child) .grip{margin:0 0 0 1px}`, '<span class="grip"></span><slot></slot>');
define('nx-tools', `:host{display:flex;align-items:center;height:100%}
  button{display:grid;place-items:center;flex:none}
  .t{width:31px;height:31px} .on{background:#fff;border:1px solid #444;border-radius:3px;--icon:20px}
  .v{width:12px;height:31px} .o{width:14px;height:31px;padding-top:16px}
  .v::before,.o::before{content:"";border:3px solid transparent;border-top:4px solid #000;border-bottom:0}
  i{flex:none;width:6px;height:30px;background:linear-gradient(90deg,transparent 2px,#b4b4b4 2px 3px,#f8f8f8 3px 4px,transparent 4px)}
`, el => el.getAttribute('icons').split(' ').map(t => t === '|' ? '<i></i>' : t === 'v' ? '<button class="v" aria-label="More"></button>' : t === ',' ? '<button class="o" aria-label="Toolbar options"></button>' :
  `<button class="t${t[0] === '*' ? ' on' : ''}" aria-label="${t.replace('*', '')}"><nx-icon name="${t.replace('*', '')}"></nx-icon></button>`).join(''));
define('nx-start', `:host{display:block}button{display:flex;align-items:center;height:31px;width:73px;padding-left:4px;gap:4px}
  button::after{content:"";border:3px solid transparent;border-top:4px solid #000;border-bottom:0}`, '<button><nx-icon name="nx"></nx-icon><slot></slot></button>');

define('nx-combo', `
  :host{display:grid;width:110px;height:17px;flex:none}
  :host(.wide){width:116px} :host(.layer){width:38px;margin:0 4px 0 3px}
  select,svg{grid-area:1/1}
  select{appearance:none;font:inherit;color:#000;width:100%;height:100%;padding:0 18px 0 1px;border:1px solid #555;border-radius:3px;outline:1px solid #f4f4f4;
    background:linear-gradient(#cfe6fb,#4f94dc) right/17px 100% no-repeat,#b9dfbb}
  svg{justify-self:end;align-self:center;margin-right:3px;pointer-events:none;width:12px;height:8px}
`, el => `<select aria-label="${el.getAttribute('label')}"><option>${el.getAttribute('value')}</option></select><svg viewBox="0 0 12 8"><path d="M0 0H12L6 7z" fill="#0c1420"/></svg>`);

define('nx-selectionbar', `
  :host{display:flex;flex:none;align-items:center;height:28px;padding-left:3px;background:linear-gradient(#c6c6c6,#d8d8d8);--icon:17px}
  nx-combo.wide{margin:0 4px 0 7px}
  button{width:23px;height:22px;display:grid;place-items:center;flex:none}
  .v{width:10px}.v::before{content:"";border:3px solid transparent;border-top:4px solid #000;border-bottom:0}
  i{width:6px;height:22px;background:linear-gradient(90deg,transparent 2px,#aaa 2px 3px,#f8f8f8 3px 4px,transparent 4px)}
  .end{margin-left:auto;padding-top:10px;margin-right:4px}
`, `<nx-combo label="Selection filter" value="No Selection Fi"></nx-combo><nx-combo class="wide" label="Selection scope" value="Entire Assembly"></nx-combo>` +
  ['sb1', '|', 'sb2', 'v', 'sb3', 'sb4', 'sb5', 'sb6', '|', 'sb7', 'v', '|', 'sb8'].map(t => t === '|' ? '<i></i>' : t === 'v' ? '<button class="v" aria-label="More"></button>' : `<button aria-label="${t}"><nx-icon name="${t}"></nx-icon></button>`).join('') + '<button class="v end" aria-label="Toolbar options"></button>');

define('nx-status', `
  :host{display:flex;flex:none;height:21px;line-height:19px;font-size:12px;font-weight:bold;background:#d9d9d9;border-top:1px solid #f8f8f8;--icon:14px;white-space:nowrap}
  div{border-left:2px solid #f4f4f4;padding-left:1px;flex:none}
  .a{flex:745;border:0;padding:0;min-width:0}.b{flex:748;min-width:0}.c{width:20px}.d{width:36px}.e{width:22px;display:grid;place-items:center}
`, '<div class="a"><slot></slot></div><div class="b"><slot name="cue"></slot></div><div class="c"></div><div class="d"></div><div class="e"><nx-icon name="full"></nx-icon></div>');

define('nx-strip', `
  :host{display:block;flex:none;height:16px;position:relative;background:linear-gradient(#999 0 1px,#c0c0c0 1px 5px,#999 5px 6px,#ccc 6px 7px,#f0f0f0 7px 10px,#b4b4b4 10px 14px,#777 14px 15px,#c8c8c8 15px)}
  div{position:absolute;left:33px;top:1px;display:flex;height:18px;width:96px;background:linear-gradient(#555,#1c1c1c 40%);z-index:1;justify-content:space-between}
  button{width:19px;border:1px solid #888;background:#f0f0f0;display:grid;place-items:center}
  svg{width:10px;height:10px}
`, `<div><button aria-label="Scroll left"><svg viewBox="0 0 10 10"><path d="M9 1L2 5L9 9" fill="none" stroke="#555" stroke-width="2"/></svg></button><button aria-label="Scroll right"><svg viewBox="0 0 10 10"><path d="M1 1L8 5L1 9" fill="none" stroke="#555" stroke-width="2"/></svg></button></div>`);

define('nx-resourcebar', `
  :host{display:flex;flex:none;flex-direction:column;width:30px;padding-top:16px;background:linear-gradient(90deg,#9c9c9c,#b0b0b0);gap:2px;align-items:flex-end}
  button{width:26px;height:40px;flex:none;border:1px solid #6a6a6a;border-right-color:#555;border-radius:4px 0 0 4px;background:linear-gradient(90deg,#e4e4e4,#ccc);display:grid;place-items:center;box-shadow:inset 1px 1px #f8f8f8}
  .on{width:28px;height:44px;background:#ececec;border-right:0;margin:-2px 0}
  .gap{margin-top:12px}
`, ['r1', 'r2', 'r3 on', 'r4', 'r5 gap', 'r6 gap', 'r7', 'r8', 'r9', 'r10', 'r11'].map(t => { const [n, c = ''] = t.split(' '); return `<button class="${c}" aria-label="Resource ${n.slice(1)}"><nx-icon name="${n}"></nx-icon></button>`; }).join(''));

define('nx-panel', `
  :host{display:flex;flex:none;flex-direction:column;width:297px;padding:7px 11px 4px 9px;background:#ececec;border-right:3px double #666}
  header{display:flex;flex:none;align-items:center;height:22px;margin-bottom:4px;--icon:12px}
  nx-icon{width:25px;padding-left:5px}
  h2{flex:1;margin:0;font-size:12px;line-height:20px;padding-left:4px;background:linear-gradient(#f4f4f4,#d6d9da);border:solid #888;border-width:0 1px 1px 0}
  ::slotted(nx-section[open]){flex:1;min-height:0}
`, el => `<header><nx-icon name="pin"></nx-icon><h2>${el.getAttribute('caption')}</h2></header><slot></slot>`);

const tableCss = `
  .box{border:1px solid #666;background:#fff;overflow:hidden}
  table{border-collapse:collapse;table-layout:fixed;width:100%}
  th{height:17px;line-height:13px;padding:0 6px;text-align:left;font-weight:normal;background:linear-gradient(#f4f4f4,#d2d6d8);border-right:1px solid #999;border-bottom:1px solid #999}
  td{height:20px;padding:0;border-right:1px solid #dcdcdc;border-bottom:1px solid #e4e4e4;white-space:nowrap}
  th:last-child,td:last-child{border-right:0}
  tbody tr:nth-child(even){background:#f6f6f6}
  tbody tr.sel{background:#93a06f;color:#fff} .sel td{border-right-color:#e8e8e8}
`;
define('nx-tree', `:host{display:block;flex:none;--icon:15px}${tableCss}.box{height:276px}
  .n{display:flex;align-items:center;height:19px}.n nx-icon{margin-right:1px}
  .x{width:10px;height:10px;margin:0 4px 0 5px;border:1px solid #777;border-radius:2px;background:#fff;flex:none}
  .x svg{display:block;width:8px;height:8px}
  .h{width:4px;border-top:1px dotted #888;margin:0 1px 0 -3px}
  .leaf{width:11px;height:1px;border-top:1px dotted #888;margin:0 1px 0 9px}
  .lab{flex:1;height:19px;line-height:19px;padding-left:2px}.sel .lab{border:dotted #222;border-width:1px 0 0 1px;padding-left:1px;background:#93a06f}
  .sel .n{background:linear-gradient(90deg,#f6f6f6 37px,#93a06f 37px)}
`, () => { const row = (t, leaf) => `<tr class="${leaf ? 'sel' : ''}"><td><div class="n">${leaf ? '<span class="leaf"></span>' : '<button class="x" aria-label="Expand"><svg viewBox="0 0 8 8"><path d="M1 4H7M4 1V7" stroke="#222"/></svg></button><span class="h"></span>'}<nx-icon name="books"></nx-icon><span class="lab">${t}</span></div></td><td></td></tr>`;
  return `<div class="box"><table><colgroup><col style="width:201px"><col></colgroup><thead><tr><th>Name</th><th></th></tr></thead><tbody>${row('Standard Parts') + row('reuse_lib', 1) + row('UDF Library')}${'<tr><td></td><td></td></tr>'.repeat(10)}</tbody></table></div>`; });

define('nx-splitter', `:host{display:flex;flex:none;height:12px;align-items:center;justify-content:center;background:linear-gradient(transparent 5px,#999 5px 6px,#fff 6px 7px,transparent 7px)}
  span{width:48px;height:6px;background:linear-gradient(#f4f4f4,#ccc);border:1px solid #888;outline:2px solid #ececec}`, '<span></span>');

define('nx-section', `
  :host{display:flex;flex-direction:column;flex:none}
  button{display:flex;flex:none;height:23px;width:100%;align-items:stretch;text-align:left;line-height:20px;color:#000050;border-right:1px solid #888;border-bottom:1px solid #999;border-top:1px solid #fff;background:linear-gradient(#f6f6f6,#d4d7d9)}
  .c{flex:1;padding-left:6px} .k{width:24px;display:grid;place-items:center;border-left:1px solid #aaa;box-shadow:inset 1px 0 #fff}
  svg{width:12px;height:10px}
  .body{flex:1;min-height:0;display:none;background:#cfcfcf;border:2px solid #999;border-bottom:0;border-right-color:#bbb}
  :host([open]) .body{display:flex}
`, el => `<button aria-expanded="${el.hasAttribute('open')}"><span class="c">${el.getAttribute('caption')}</span><span class="k"><svg viewBox="0 0 12 10"><path d="${el.hasAttribute('open') ? 'M1 9L6 2L11 9' : 'M1 1L6 8L11 1'}" fill="none" stroke="#555" stroke-width="2.6"/></svg></span></button><div class="body"><slot></slot></div>`);

define('nx-members', `:host{display:flex;flex-direction:column;flex:1;min-height:0;min-width:0;padding:6px 5px}${tableCss}
  .box{flex:1;min-height:0;--icon:15px}
  .bar{display:flex;flex:none;align-items:center;height:34px;margin-bottom:9px;gap:4px}
  .drop{display:flex;flex:none;width:51px;height:32px;border:1px solid #777;border-radius:3px;outline:1px solid #f4f4f4;overflow:hidden;--icon:20px}
  .drop span{flex:1;height:100%;display:grid;place-items:center;background:#b9dfbb}
  .drop i{width:17px;height:100%;display:grid;place-items:center;background:linear-gradient(#cfe6fb,#3f84d4);border-left:1px solid #468}
  .drop i::before{content:"";border:6px solid transparent;border-top:7px solid #0c1420;border-bottom:0}
  .nav{flex:none;width:31px;height:31px;border:2px solid #aaa;border-radius:5px;background:linear-gradient(#f8f8f8,#ddd);display:grid;place-items:center;--icon:15px}
  .p{margin-left:4px}.bar p{margin:0;padding:0 1px 4px 4px;white-space:nowrap}
  th .up{display:inline-block;border:5px solid transparent;border-bottom:6px solid #111;border-top:0;margin-left:16px}
  .n{display:flex;align-items:center;height:19px}.n nx-icon{background:#fff;padding:2px 1px;height:19px}.n span{padding-left:2px;flex:1;height:19px;line-height:18px;border:dotted #222;border-width:1px 0 0 1px}
  .s{padding-left:4px}
`, `<div class="bar"><button class="drop" aria-label="View style"><span><nx-icon name="grid"></nx-icon></span><i></i></button><button class="drop" aria-label="Filter"><span><nx-icon name="funnel"></nx-icon></span><i></i></button>
  <button class="nav p" aria-label="First"><nx-icon name="prev"></nx-icon></button><p>1-1 of 1</p><button class="nav p" aria-label="Last"><nx-icon name="next"></nx-icon></button></div>
  <div class="box"><table><colgroup><col style="width:161px"><col style="width:80px"><col></colgroup><thead><tr><th>Object<span class="up"></span></th><th>Standard</th><th></th></tr></thead>
  <tbody><tr class="sel"><td><div class="n"><nx-icon name="part"></nx-icon><span>flange</span></div></td><td class="s">KE Part</td><td></td></tr>${'<tr><td></td><td></td><td></td></tr>'.repeat(17)}</tbody></table></div>`);

/* ---------- model view ---------- */
const oval = (x, y, k, attrs) => `<circle r="1" transform="matrix(${337.5 * k} ${-17.8 * k} 0 ${251.7 * k} ${x} ${y})" vector-effect="non-scaling-stroke" ${attrs}/>`;
const holes = [[736, 503.5], [1050.5, 457], [1094, 690], [779, 736]];
define('nx-viewport', `
  :host{display:block;flex:1;min-width:0;border-right:3px solid #f0f0f0;background:linear-gradient(#b2b3b4,#c4c6c8 19%,#dcdddf 52%,#e6e8ea 75%)}
  svg{display:block;width:100%;height:100%;font:11px "Liberation Sans",sans-serif}
`, `<svg viewBox="330 183 1241 797" role="img" aria-label="Flange model">
  <defs>
    <linearGradient id="side"><stop offset="0" stop-color="#8e3d37"/><stop offset=".25" stop-color="#722c28"/><stop offset=".5" stop-color="#57201d"/><stop offset=".68" stop-color="#702b27"/><stop offset="1" stop-color="#bd4a42"/></linearGradient>
    <linearGradient id="bore"><stop offset="0" stop-color="#73858a"/><stop offset=".3" stop-color="#526063"/><stop offset=".55" stop-color="#3c4547"/><stop offset="1" stop-color="#536165"/></linearGradient>
    <clipPath id="mid">${oval(915, 596.5, .2, '')}</clipPath>
  </defs>
  ${oval(922.5, 668.5, 1, 'fill="url(#side)" stroke="#d5534e" stroke-width="2"')}
  <path d="M577.500 614.800L585 686.300L1260 650.700L1252.500 579.200z" fill="url(#side)"/>
  <path d="M577.500 615L585 686M1252.500 579L1260 651" stroke="#b04640" stroke-width="1.500"/>
  ${oval(915, 597, 1, 'fill="#ff7467" stroke="#d0504b" stroke-width="2.500"')}
  ${holes.map(([x, y]) => oval(x, y, .146, 'fill="url(#bore)" stroke="#d0504b" stroke-width="2.500"')).join('')}
  ${oval(915, 596.5, .2, 'fill="url(#bore)"')}
  <g clip-path="url(#mid)">${oval(922.5, 669, .2, 'fill="#dfe0e2" stroke="#d0504b" stroke-width="2.500"')}</g>
  ${oval(915, 596.5, .2, 'fill="none" stroke="#d0504b" stroke-width="2.500"')}
  ${oval(915, 597, .665, 'fill="none" stroke="#9c9058" stroke-width="1.500" stroke-dasharray="12 4 4 4 4 4"')}
  <g fill="none" stroke="#a09a70" stroke-width="1.500">
    <path d="M914 585L908 608L912 613H919L924 608L914 585M917 609L920 646"/>
    <path d="M934 611L942 603M949 595L957 588M957 590L960 602M959 608L960 625M920 626L925 621M934 635L943 640"/>
  </g>
  <g fill="none" stroke="#f0dada" stroke-width="1.500">
    <path d="M920 646L922 669L970 623L985 602L999 590L982 618L976 614M922 669L993 706M998 700L1023 722L993 714L990 708L998 700"/>
    <path d="M979 603Q971 604 972 612L977 614" stroke="#fff"/>
  </g>
  <g fill="#c8c4b0"><text x="913" y="580">Z</text><text x="1001" y="586" fill="#e8b8a8">Y</text><text x="1028" y="724" fill="#f0d0c8">X</text>
  <text x="963" y="691" fill="#f0d0c8">XC</text><text x="919" y="636" fill="#dcb888">ZC</text><text x="955" y="638" fill="#f0c8a8">YC</text></g>
  <g fill="none" stroke-width="2"><path d="M399 910L397 887" stroke="#3030e0"/><path d="M399 910L422 888" stroke="#28b888" stroke-width="1.500"/><path d="M399 910L428 925" stroke="#e02828"/></g>
  <circle cx="399" cy="910" r="4" fill="#aaa"/>
  <text x="393" y="885" fill="#3030e0">Z</text><text x="425" y="887" fill="#28b888">Y</text><text x="434" y="933" fill="#e02828">X</text>
  </svg>`);

define('nx-ime', `
  :host{display:flex;align-items:center;gap:3px;height:18px;padding:0 2px 0 3px;background:linear-gradient(#fff,#e8e4ec);border:1px solid #888;font:14px/16px "Noto Sans CJK SC",sans-serif;color:#d8188c}
  i{width:1px;height:12px;background:#999}
  b{width:14px;height:14px;font:bold 10px/14px "Noto Sans CJK SC",sans-serif;color:#fff;background:#f08020;border-radius:2px;text-align:center}
  svg{width:13px;height:13px}
`, `<i></i><b>加</b><svg viewBox="0 0 13 13"><path d="M8 0Q12 5 9 9Q5 13 0 9Q8 9 8 0" fill="#f8e820" stroke="#222"/></svg><svg viewBox="0 0 13 13"><g fill="none" stroke="#801828" stroke-width="1.500"><circle cx="3" cy="5" r="2.200"/><path d="M5 5Q6 10 1 12"/><circle cx="10" cy="5" r="2"/></g></svg><span>简全</span>`);
</script>
</body>
</html>
